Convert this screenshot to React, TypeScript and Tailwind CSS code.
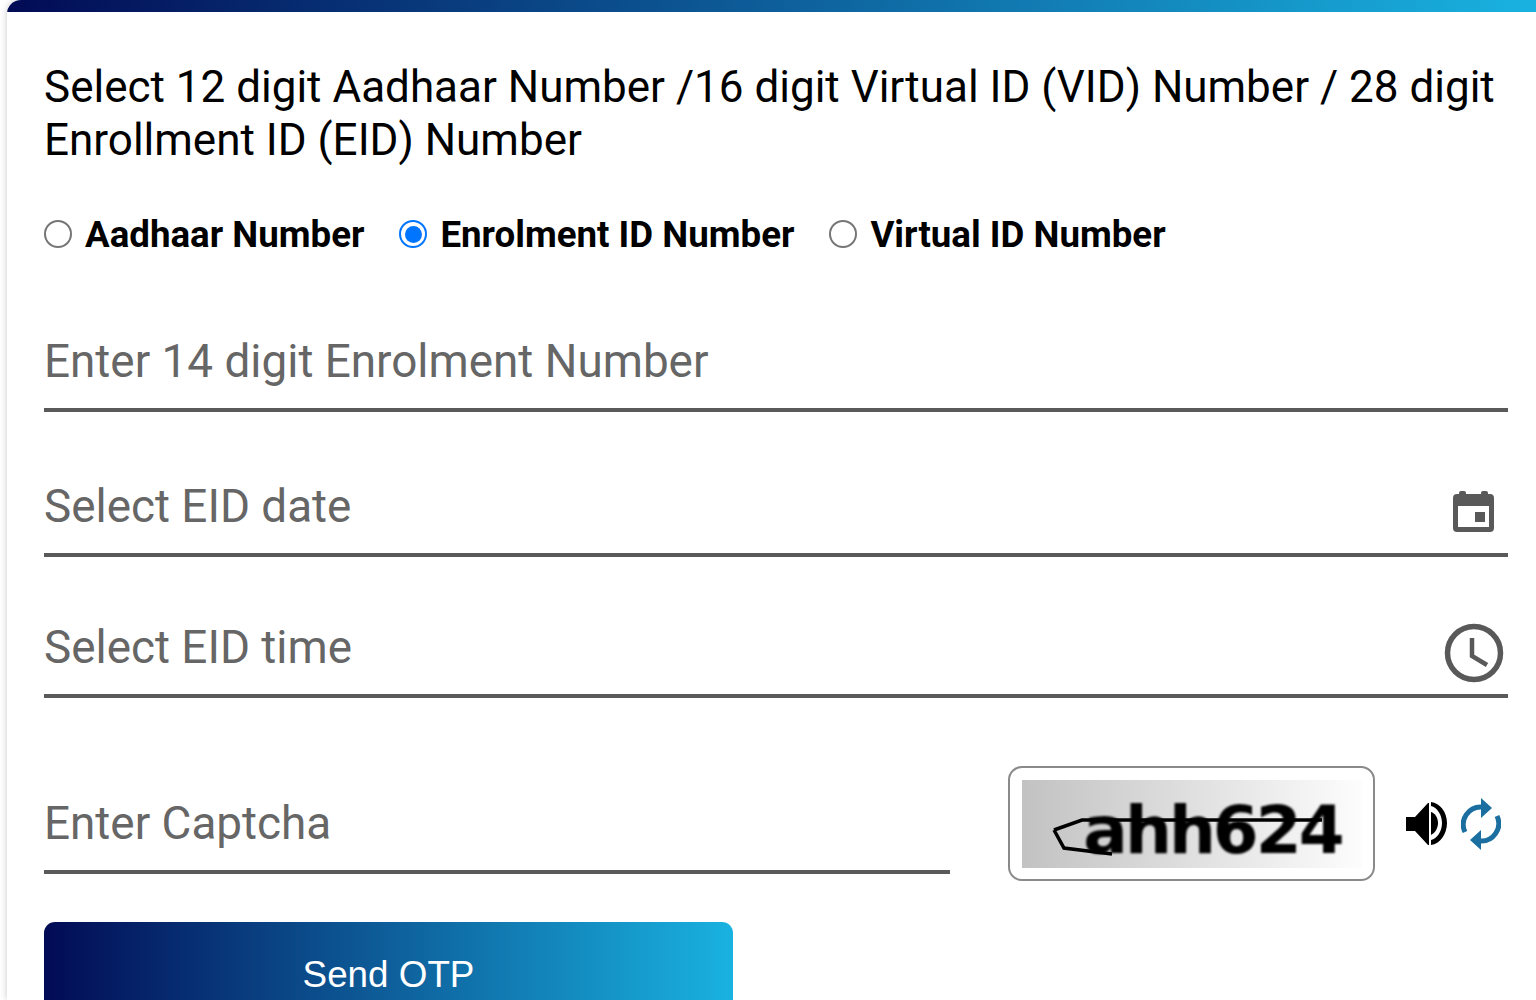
import React from "react";

function CalendarIcon() {
  return (
    <svg width="42" height="42" viewBox="0 0 42 42" className="block">
      <rect x="6" y="0" width="7" height="8" rx="2" fill="#595959" />
      <rect x="28" y="0" width="7" height="8" rx="2" fill="#595959" />
      <path fillRule="evenodd" fill="#595959" d="M4 3h33a4 4 0 0 1 4 4v30a4 4 0 0 1-4 4H4a4 4 0 0 1-4-4V7a4 4 0 0 1 4-4zM5 15v21h31V15z" />
      <rect x="22" y="21" width="10" height="10" fill="#595959" />
    </svg>
  );
}

function ClockIcon() {
  return (
    <svg width="60" height="60" viewBox="0 0 60 60" className="block">
      <circle cx="30" cy="30" r="26.5" fill="none" stroke="#595959" strokeWidth="5.5" />
      <path d="M28 15v18l15 9" fill="none" stroke="#595959" strokeWidth="4.5" />
    </svg>
  );
}

function SpeakerIcon() {
  return (
    <svg width="44" height="44" viewBox="0 0 44 44" className="block">
      <path d="M1 15h9L23 1h1v42h-1L10 29H1z" fill="#000" />
      <path d="M26 0c9 1 16 10 16 21s-7 21-16 22v-5c6-1 11-9 11-17S32 5 26 4z" fill="#000" />
      <path d="M26 10c4 1 7 6 7 11s-3 10-7 12z" fill="#000" />
    </svg>
  );
}

function RefreshIcon() {
  return (
    <svg width="40" height="52" viewBox="0 0 40 52" className="block">
      <path d="M4 34A17.5 17.5 0 0 1 21 9" fill="none" stroke="#1a6fa0" strokeWidth="5" />
      <path d="M20 0l11 10-11 10z" fill="#1a6fa0" />
      <path d="M36 18A17.5 17.5 0 0 1 19 43" fill="none" stroke="#1a6fa0" strokeWidth="5" />
      <path d="M20 52L9 42l11-10z" fill="#1a6fa0" />
    </svg>
  );
}

function Radio({ label, checked }: { label: string; checked?: boolean }) {
  return (
    <label className="flex items-center gap-[13px]">
      {checked ? (
        <span className="mb-[2px] flex h-[28px] w-[28px] items-center justify-center rounded-full border-[2.5px] border-[#0075ff]">
          <span className="h-[17px] w-[17px] rounded-full bg-[#0075ff]" />
        </span>
      ) : (
        <span className="mb-[2px] h-[28px] w-[28px] rounded-full border-[2.5px] border-[#767676]" />
      )}
      <span className="text-[36.7px] font-bold leading-[40px] text-black">{label}</span>
    </label>
  );
}

function Field({
  placeholder,
  icon,
  className,
  inputClass,
}: {
  placeholder: string;
  icon?: React.ReactNode;
  className: string;
  inputClass: string;
}) {
  return (
    <div className={`flex items-center border-b-4 border-[#5a5a5a] ${className}`}>
      <input
        placeholder={placeholder}
        readOnly
        className={`min-w-0 flex-1 bg-transparent text-[45.85px] leading-[53px] text-[#666] outline-none placeholder:text-[#666] ${inputClass}`}
      />
      {icon}
    </div>
  );
}

export default function App() {
  return (
    <div className="h-[1000px] overflow-hidden bg-white font-['Roboto',sans-serif]">
      <div className="ml-[7px] h-[1000px] overflow-hidden rounded-tl-[14px] bg-white shadow-[0_0_7px_rgba(0,0,0,0.22)]">
        <div className="h-[12px] bg-[linear-gradient(90deg,#020b55,#19b2e0)]" />
        <div className="pl-[37px] pr-[28px]">
          <h1 className="h-[156px] pt-[49px] text-[44px] font-normal leading-[53.4px] text-black">
            Select 12 digit Aadhaar Number /16 digit Virtual ID (VID) Number / 28 digit Enrollment ID (EID) Number
          </h1>
          <div className="mt-[47px] flex gap-[35px]">
            <Radio label="Aadhaar Number" />
            <Radio label="Enrolment ID Number" checked />
            <Radio label="Virtual ID Number" />
          </div>
          <Field placeholder="Enter 14 digit Enrolment Number" className="mt-[57px] h-[100px]" inputClass="pt-[2px]" />
          <Field
            placeholder="Select EID date"
            className="mt-[41px] h-[104px] pr-[13px]"
            inputClass="pt-[6px]"
            icon={<span className="mt-[18px]"><CalendarIcon /></span>}
          />
          <Field
            placeholder="Select EID time"
            className="mt-[37px] h-[104px] pr-[4px]"
            inputClass="pt-[6px]"
            icon={<span className="mt-[18px]"><ClockIcon /></span>}
          />
          <div className="mt-[68px] flex items-start">
            <Field placeholder="Enter Captcha" className="mt-[4px] h-[104px] w-[906px]" inputClass="pt-[6px]" />
            <div className="ml-[58px] flex h-[115px] w-[367px] items-center justify-center rounded-[14px] border-2 border-[#8a8a8a] bg-white">
              <div className="relative flex h-[88px] w-[340px] items-center justify-center overflow-hidden bg-[linear-gradient(90deg,#c2c2c2,#fdfdfd)]">
                <span className="relative left-[21px] top-[7px] text-[66px] font-bold leading-none tracking-[-3px] text-black blur-[0.9px] font-['DejaVu_Sans',sans-serif]">
                  ahh624
                </span>
                <svg width="340" height="88" viewBox="0 0 340 88" className="absolute left-0 top-0 block">
                  <path d="M32 50L60 40H300M32 50L42 68L90 74" fill="none" stroke="#000" strokeWidth="3.5" />
                </svg>
              </div>
            </div>
            <div className="ml-[30px] mt-[32px] flex items-center gap-[12px]">
              <SpeakerIcon />
              <RefreshIcon />
            </div>
          </div>
          <button className="mt-[41px] h-[110px] w-[689px] rounded-[11px] bg-[linear-gradient(90deg,#020b55,#19b2e0)] pb-[4px] text-[36.8px] text-white font-['Liberation_Sans',sans-serif]">
            Send OTP
          </button>
        </div>
      </div>
    </div>
  );
}
